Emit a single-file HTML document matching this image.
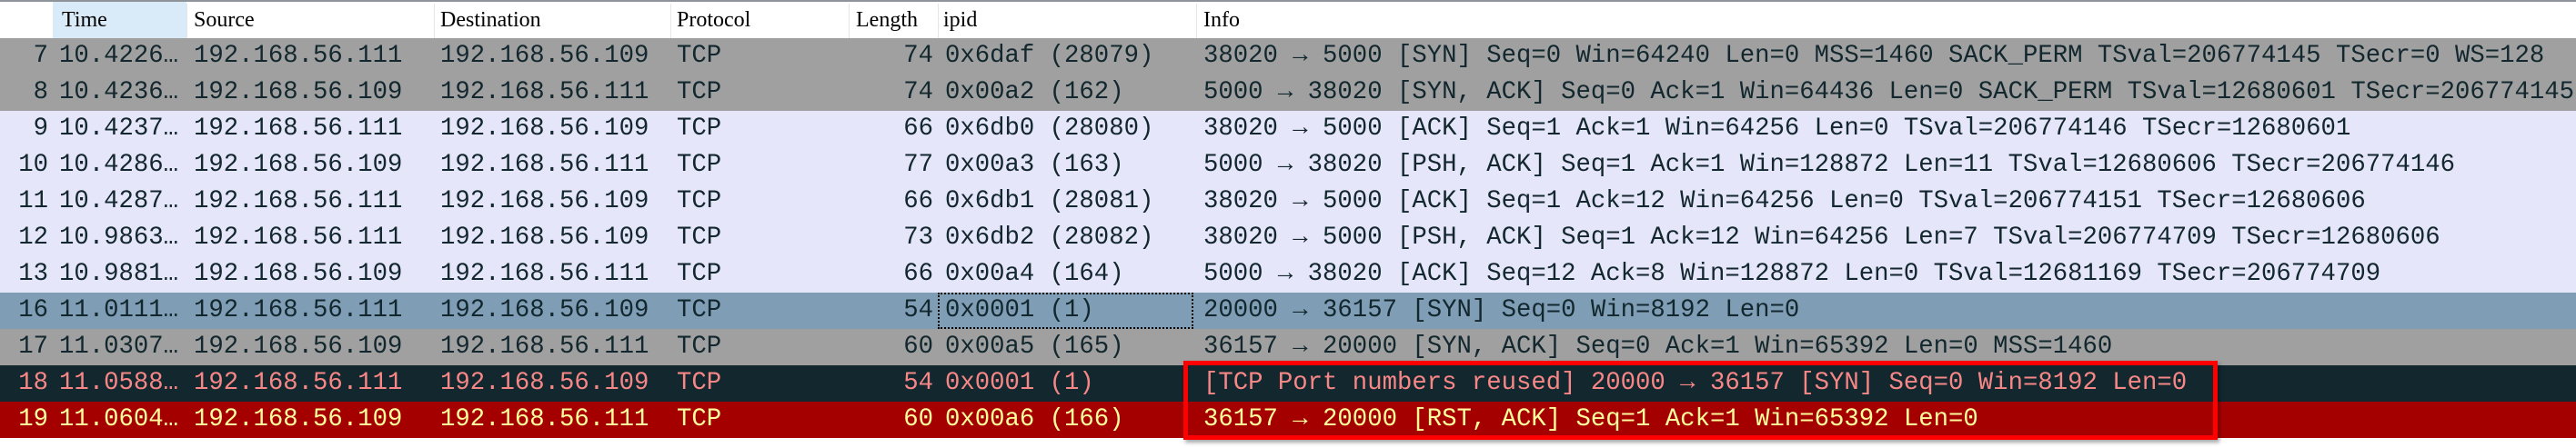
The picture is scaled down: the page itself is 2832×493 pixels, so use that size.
<!DOCTYPE html>
<html><head><meta charset="utf-8"><style>
*{margin:0;padding:0;box-sizing:border-box}
body{width:2832px;height:493px;background:#fff;position:relative;overflow:hidden;font-family:"Liberation Mono","DejaVu Sans Mono",monospace;font-size:27.3px;color:#12272e}
.top{position:absolute;left:0;top:0;width:2832px;height:2px;background:#8f949b}
.hdr{position:absolute;top:2px;height:40px;font-family:"Liberation Serif","Noto Serif CJK SC",serif;font-size:24px;line-height:40px;color:#000;white-space:nowrap}
.sep{position:absolute;top:4px;height:38px;width:1px;background:#e6e6e6}
.row{position:absolute;left:0;width:2832px;height:40px;line-height:40px;white-space:pre}
.row span{position:absolute;top:0}
.no{right:calc(2832px - 53px)}
.ln{right:calc(2832px - 1026px)}
.box{position:absolute;left:1301px;top:397px;width:1137px;height:87px;border:5px solid #f00;box-shadow:2px 3px 4px rgba(0,0,0,.35)}
.dot{position:absolute;left:1031px;top:322px;width:281px;height:40px;border:2px dotted #000}
</style></head><body>
<div class="top"></div>
<div class="hdr" style="left:58px;width:147px;background:#d9eaf9"></div>
<div class="hdr" style="left:68px">Time</div>
<div class="hdr" style="left:213px">Source</div>
<div class="hdr" style="left:484px">Destination</div>
<div class="hdr" style="left:744px">Protocol</div>
<div class="hdr" style="left:941px">Length</div>
<div class="hdr" style="left:1037px">ipid</div>
<div class="hdr" style="left:1323px">Info</div>
<div class="sep" style="left:205px"></div><div class="sep" style="left:477px"></div><div class="sep" style="left:737px"></div><div class="sep" style="left:933px"></div><div class="sep" style="left:1031px"></div><div class="sep" style="left:1315px"></div>

<div class="row" style="top:42px;background:#a0a0a0"><span class="no">7</span><span style="left:65px">10.4226…</span><span style="left:213px">192.168.56.111</span><span style="left:484px">192.168.56.109</span><span style="left:744px">TCP</span><span class="ln">74</span><span style="left:1039px">0x6daf (28079)</span><span style="left:1323px">38020 → 5000 [SYN] Seq=0 Win=64240 Len=0 MSS=1460 SACK_PERM TSval=206774145 TSecr=0 WS=128</span></div>
<div class="row" style="top:82px;background:#a0a0a0"><span class="no">8</span><span style="left:65px">10.4236…</span><span style="left:213px">192.168.56.109</span><span style="left:484px">192.168.56.111</span><span style="left:744px">TCP</span><span class="ln">74</span><span style="left:1039px">0x00a2 (162)</span><span style="left:1323px">5000 → 38020 [SYN, ACK] Seq=0 Ack=1 Win=64436 Len=0 SACK_PERM TSval=12680601 TSecr=206774145</span></div>
<div class="row" style="top:122px;background:#e6e6fa"><span class="no">9</span><span style="left:65px">10.4237…</span><span style="left:213px">192.168.56.111</span><span style="left:484px">192.168.56.109</span><span style="left:744px">TCP</span><span class="ln">66</span><span style="left:1039px">0x6db0 (28080)</span><span style="left:1323px">38020 → 5000 [ACK] Seq=1 Ack=1 Win=64256 Len=0 TSval=206774146 TSecr=12680601</span></div>
<div class="row" style="top:162px;background:#e6e6fa"><span class="no">10</span><span style="left:65px">10.4286…</span><span style="left:213px">192.168.56.109</span><span style="left:484px">192.168.56.111</span><span style="left:744px">TCP</span><span class="ln">77</span><span style="left:1039px">0x00a3 (163)</span><span style="left:1323px">5000 → 38020 [PSH, ACK] Seq=1 Ack=1 Win=128872 Len=11 TSval=12680606 TSecr=206774146</span></div>
<div class="row" style="top:202px;background:#e6e6fa"><span class="no">11</span><span style="left:65px">10.4287…</span><span style="left:213px">192.168.56.111</span><span style="left:484px">192.168.56.109</span><span style="left:744px">TCP</span><span class="ln">66</span><span style="left:1039px">0x6db1 (28081)</span><span style="left:1323px">38020 → 5000 [ACK] Seq=1 Ack=12 Win=64256 Len=0 TSval=206774151 TSecr=12680606</span></div>
<div class="row" style="top:242px;background:#e6e6fa"><span class="no">12</span><span style="left:65px">10.9863…</span><span style="left:213px">192.168.56.111</span><span style="left:484px">192.168.56.109</span><span style="left:744px">TCP</span><span class="ln">73</span><span style="left:1039px">0x6db2 (28082)</span><span style="left:1323px">38020 → 5000 [PSH, ACK] Seq=1 Ack=12 Win=64256 Len=7 TSval=206774709 TSecr=12680606</span></div>
<div class="row" style="top:282px;background:#e6e6fa"><span class="no">13</span><span style="left:65px">10.9881…</span><span style="left:213px">192.168.56.109</span><span style="left:484px">192.168.56.111</span><span style="left:744px">TCP</span><span class="ln">66</span><span style="left:1039px">0x00a4 (164)</span><span style="left:1323px">5000 → 38020 [ACK] Seq=12 Ack=8 Win=128872 Len=0 TSval=12681169 TSecr=206774709</span></div>
<div class="row" style="top:322px;background:#7f9db4"><span class="no">16</span><span style="left:65px">11.0111…</span><span style="left:213px">192.168.56.111</span><span style="left:484px">192.168.56.109</span><span style="left:744px">TCP</span><span class="ln">54</span><span style="left:1039px">0x0001 (1)</span><span style="left:1323px">20000 → 36157 [SYN] Seq=0 Win=8192 Len=0</span></div>
<div class="row" style="top:362px;background:#a0a0a0"><span class="no">17</span><span style="left:65px">11.0307…</span><span style="left:213px">192.168.56.109</span><span style="left:484px">192.168.56.111</span><span style="left:744px">TCP</span><span class="ln">60</span><span style="left:1039px">0x00a5 (165)</span><span style="left:1323px">36157 → 20000 [SYN, ACK] Seq=0 Ack=1 Win=65392 Len=0 MSS=1460</span></div>
<div class="row" style="top:402px;background:#12272e;color:#f78787"><span class="no">18</span><span style="left:65px">11.0588…</span><span style="left:213px">192.168.56.111</span><span style="left:484px">192.168.56.109</span><span style="left:744px">TCP</span><span class="ln">54</span><span style="left:1039px">0x0001 (1)</span><span style="left:1323px">[TCP Port numbers reused] 20000 → 36157 [SYN] Seq=0 Win=8192 Len=0</span></div>
<div class="row" style="top:442px;background:#a40000;color:#fffc9c"><span class="no">19</span><span style="left:65px">11.0604…</span><span style="left:213px">192.168.56.109</span><span style="left:484px">192.168.56.111</span><span style="left:744px">TCP</span><span class="ln">60</span><span style="left:1039px">0x00a6 (166)</span><span style="left:1323px">36157 → 20000 [RST, ACK] Seq=1 Ack=1 Win=65392 Len=0</span></div>
<div class="dot"></div>
<div class="box"></div>
</body></html>
